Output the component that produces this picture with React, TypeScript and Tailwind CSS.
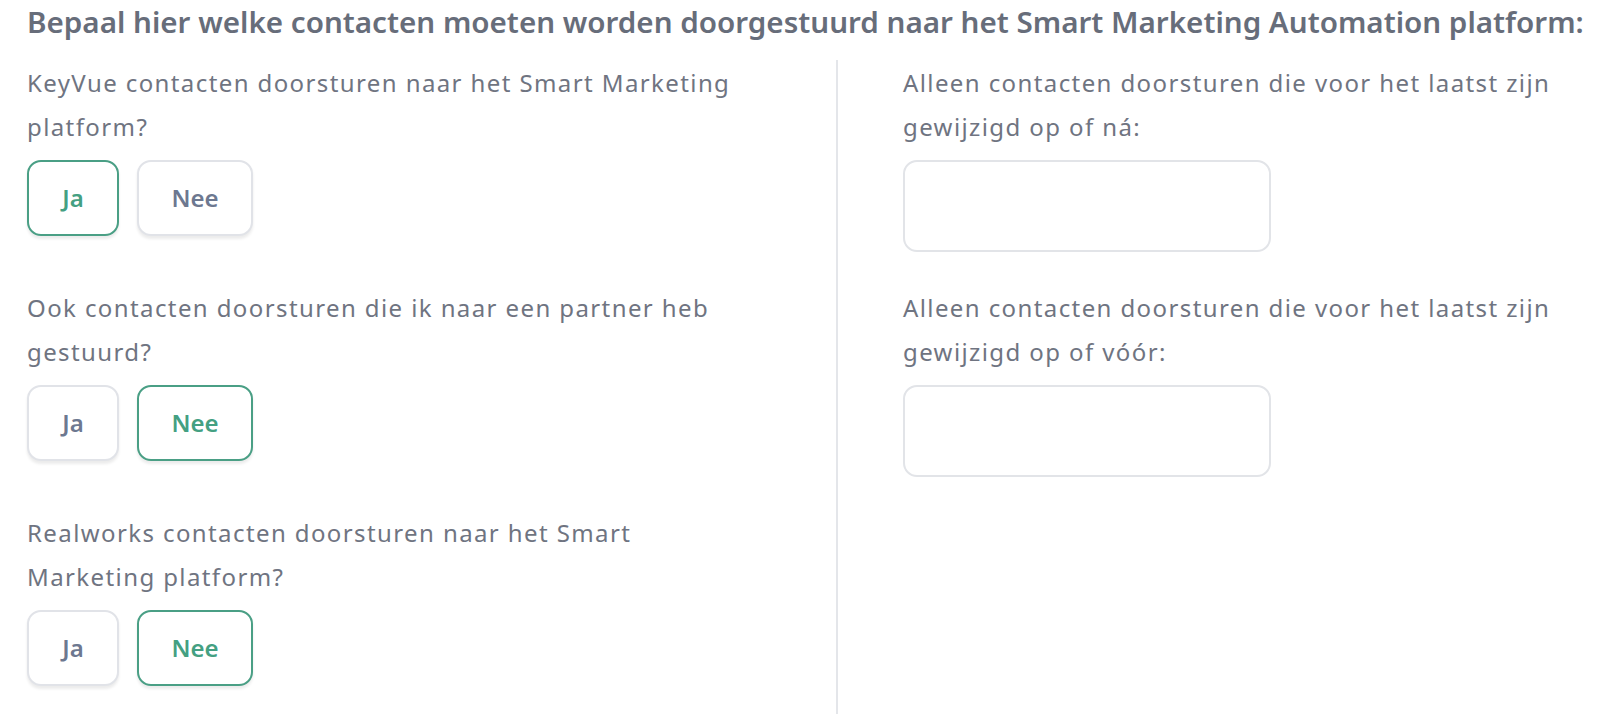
import React from "react";

function Toggle({ value }: { value: "ja" | "nee" }) {
  const base =
    "h-[76px] rounded-[14px] border-2 bg-white text-[24px] font-semibold shadow-[0_3px_3px_rgba(0,0,0,0.08)] font-['Noto_Sans',sans-serif]";
  const on = "border-[#4a9f85] text-[#44a082]";
  const off = "border-[#e1e3e8] text-[#6d7890]";
  return (
    <div className="mt-[11px] flex gap-[18px]">
      <button className={`${base} w-[92px] ${value === "ja" ? on : off}`}>Ja</button>
      <button className={`${base} w-[116px] ${value === "nee" ? on : off}`}>Nee</button>
    </div>
  );
}

function Label({ children }: { children: React.ReactNode }) {
  return <p className="text-[24px] leading-[44px] tracking-[1.4px] text-[#6f7481]">{children}</p>;
}

function DateInput() {
  return <div className="mt-[11px] h-[92px] w-[368px] rounded-[14px] border-2 border-[#e2e4e8] bg-white" />;
}

export default function App() {
  return (
    <div className="min-h-screen overflow-hidden bg-white pl-[27px] font-['Noto_Sans',sans-serif]">
      <h2 className="whitespace-nowrap text-[29.6px] font-semibold leading-[44px] text-[#676d7a]">
        Bepaal hier welke contacten moeten worden doorgestuurd naar het Smart Marketing Automation platform:
      </h2>
      <div className="mt-[16px] flex">
        <div className="mr-[89px] w-[720px] shrink-0 pt-px">
          <div className="mb-[50px]">
            <Label>KeyVue contacten doorsturen naar het Smart Marketing platform?</Label>
            <Toggle value="ja" />
          </div>
          <div className="mb-[50px]">
            <Label>Ook contacten doorsturen die ik naar een partner heb gestuurd?</Label>
            <Toggle value="nee" />
          </div>
          <div className="mb-[60px]">
            <Label>Realworks contacten doorsturen naar het Smart Marketing platform?</Label>
            <Toggle value="nee" />
          </div>
        </div>
        <div className="w-[757px] border-l-2 border-[#e4e6ea] pl-[65px] pt-px">
          <div className="mb-[34px]">
            <Label>Alleen contacten doorsturen die voor het laatst zijn gewijzigd op of ná:</Label>
            <DateInput />
          </div>
          <div>
            <Label>Alleen contacten doorsturen die voor het laatst zijn gewijzigd op of vóór:</Label>
            <DateInput />
          </div>
        </div>
      </div>
    </div>
  );
}
